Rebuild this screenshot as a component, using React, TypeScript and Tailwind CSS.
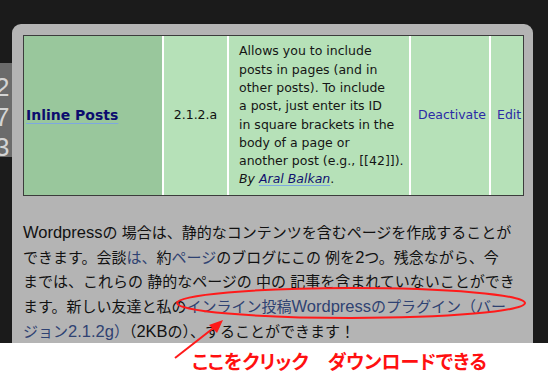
import React from 'react';

const jp = "font-['Liberation_Sans','Noto_Sans_CJK_JP',sans-serif]";
const tbl = "font-['DejaVu_Sans',sans-serif]";

function SideDigits() {
  return (
    <div className="w-[12px] shrink-0 pt-[63px]">
      <div className="h-[94px] overflow-hidden bg-[#6b6b6b] pt-[9px]">
        <div className="ml-[-5px] font-['Liberation_Sans',sans-serif] text-[26px] leading-[30px] text-[#d4d4d4]">
          <div>2</div>
          <div>7</div>
          <div>3</div>
        </div>
      </div>
    </div>
  );
}

function PluginRow() {
  return (
    <div className={`flex h-[161px] w-[501px] border border-[#3c3c3c] bg-white ${tbl}`}>
      <div className="flex w-[138px] items-center bg-[#99c79c] pl-[2px]">
        <a
          href="#"
          className="text-[14px] font-bold text-[#0c0c6e] underline decoration-[#7ea8e0] underline-offset-[3px]"
        >
          Inline Posts
        </a>
      </div>
      <div className="ml-[2px] flex w-[63px] items-center justify-center bg-[#b6e1b8] text-[12.5px] text-[#111]">
        2.1.2.a
      </div>
      <div className="ml-[2px] flex w-[180px] items-center bg-[#b6e1b8] pl-[10px] text-[12.5px] leading-[18.3px] text-[#151515] whitespace-nowrap">
        <div>
          Allows you to include
          <br />
          posts in pages (and in
          <br />
          other posts). To include
          <br />
          a post, just enter its ID
          <br />
          in square brackets in the
          <br />
          body of a page or
          <br />
          another post (e.g., [[42]]).
          <br />
          <i>
            By{' '}
            <a href="#" className="text-[#10106e] underline decoration-[#7ea8e0] underline-offset-[2px]">
              Aral Balkan
            </a>
          </i>
          .
        </div>
      </div>
      <div className="ml-[2px] flex w-[78px] items-center bg-[#b6e1b8] pl-[7px] text-[12.5px]">
        <a href="#" className="text-[#2b2ba6]">
          Deactivate
        </a>
      </div>
      <div className="ml-[2px] flex w-[32px] items-center bg-[#b6e1b8] pl-[6px] text-[12.5px]">
        <a href="#" className="text-[#2b2ba6]">
          Edit
        </a>
      </div>
    </div>
  );
}

function L({ children }: { children: React.ReactNode }) {
  return <span className="text-[16.5px]">{children}</span>;
}

function B({ children }: { children: React.ReactNode }) {
  return <span className="text-[#2f4272]">{children}</span>;
}

function Intro() {
  return (
    <p className={`mt-[24px] whitespace-nowrap text-[15px] leading-[24px] text-[#111] ${jp}`}>
      <L>Wordpress</L>の 場合は、静的なコンテンツを含むページを作成することが
      <br />
      できます。会談<B>は、</B>約<B>ページ</B>のブログにこの 例を<L>2</L>つ。残念ながら、今
      <br />
      までは、これらの 静的なページの 中の 記事を含まれていないことができ
      <br />
      ます。新しい友達と私の
      <B>
        インライン投稿<L>Wordpress</L>のプラグイン（バー
      </B>
      <br />
      <B>
        ジョン<L>2.1.2g</L>）
      </B>
      （<L>2KB</L>の）、することができます！
    </p>
  );
}

export default function App() {
  return (
    <div className="relative h-[376px] w-[548px] overflow-hidden bg-[#1b1b1b]">
      <div className="flex h-[343px]">
        <SideDigits />
        <div className="mt-[24px] w-[521px] rounded-t-[9px] bg-[#b4b4b4] pl-[11px] pt-[11px]">
          <PluginRow />
          <Intro />
        </div>
      </div>
      <div className="h-[33px] bg-white pl-[192px] pt-[8px]">
        <span
          className={`text-[19px] font-bold leading-[24px] text-[#ff1010] [font-feature-settings:'palt'] ${jp}`}
        >
          ここをクリック　ダウンロードできる
        </span>
      </div>

      <svg className="pointer-events-none absolute left-0 top-0" width="548" height="376">
        <ellipse cx="351" cy="303" rx="174" ry="15" fill="none" stroke="#ff1a1a" strokeWidth="2" />
        <line x1="175" y1="358" x2="216" y2="326" stroke="#ff1a1a" strokeWidth="2" />
        <polygon points="223,320 209,325 217,333" fill="#ff1a1a" />
      </svg>
    </div>
  );
}
